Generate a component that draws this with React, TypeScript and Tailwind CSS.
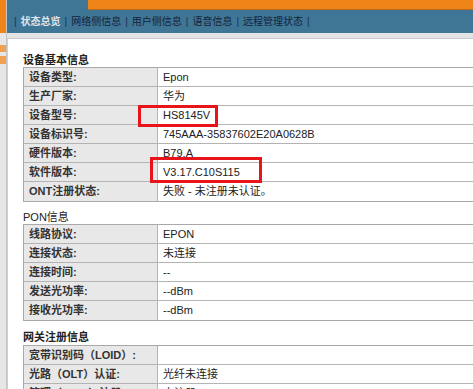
import React, { FC } from 'react';

type Row = { label: string; value: string };

const basic: Row[] = [
  { label: '设备类型:', value: 'Epon' },
  { label: '生产厂家:', value: '华为' },
  { label: '设备型号:', value: 'HS8145V' },
  { label: '设备标识号:', value: '745AAA-35837602E20A0628B' },
  { label: '硬件版本:', value: 'B79.A' },
  { label: '软件版本:', value: 'V3.17.C10S115' },
  { label: 'ONT注册状态:', value: '失败 - 未注册未认证。' },
];

const pon: Row[] = [
  { label: '线路协议:', value: 'EPON' },
  { label: '连接状态:', value: '未连接' },
  { label: '连接时间:', value: '--' },
  { label: '发送光功率:', value: '--dBm' },
  { label: '接收光功率:', value: '--dBm' },
];

const gateway: Row[] = [
  { label: '宽带识别码（LOID）:', value: '' },
  { label: '光路（OLT）认证:', value: '光纤未连接' },
  { label: '管理（ITMS）注册:', value: '未注册' },
];

const tabs = ['状态总览', '网络侧信息', '用户侧信息', '语音信息', '远程管理状态'];

const InfoTable: FC<{ rows: Row[] }> = ({ rows }) => (
  <div className="border border-[#a9a9a9] w-[460px] shrink-0">
    {rows.map((r, i) => (
      <div key={i} className={`flex h-[19px] ${i < rows.length - 1 ? 'border-b border-[#b4b4b4]' : ''}`}>
        <div className="w-[134px] shrink-0 bg-[#e8e8e8] border-r border-[#b4b4b4] pl-[5px] flex items-center font-bold text-[#333] text-[11px] whitespace-nowrap">
          {r.label}
        </div>
        <div className="flex-1 bg-white pl-[5px] flex items-center text-[#222] text-[11px] whitespace-nowrap">{r.value}</div>
      </div>
    ))}
  </div>
);

const App: FC = () => {
  return (
    <div
      className="w-[473px] h-[389px] overflow-hidden flex bg-white relative"
      style={{ fontFamily: '"Liberation Sans", "Noto Sans CJK SC", sans-serif' }}
    >
      <div className="w-[7px] shrink-0 flex flex-col bg-[#e6e6e6] border-r border-[#c4c4c4]">
        <div className="h-[33px] shrink-0 bg-[#ef8418]" />
        <div className="h-[12px] shrink-0" />
        <div className="h-[7px] shrink-0 bg-[#f0a050]" />
        <div className="h-[4px] shrink-0" />
        <div className="h-[8px] shrink-0 bg-[#f0a050]" />
      </div>

      <div className="flex-1 flex flex-col min-w-0">
        <div className="flex h-[10px] shrink-0">
          <div className="w-[81px] bg-[#3f7595]" />
          <div className="flex-1 bg-[#ef8418] border-b border-[#b86a1c]" />
        </div>
        <div className="h-[23px] shrink-0 bg-[#3f7595] flex items-center pl-[3px] text-[10px] whitespace-nowrap">
          {tabs.map((t, i) => (
            <React.Fragment key={t}>
              <span className="text-[#1d2f55] mx-[4px]">|</span>
              <span className={i === 0 ? 'text-[#dfe5ec] font-bold' : 'text-[#15243a]'}>{t}</span>
            </React.Fragment>
          ))}
          <span className="text-[#1d2f55] mx-[4px]">|</span>
        </div>
        <div className="h-[6px] shrink-0 bg-[#e3e3e3] border-b border-[#c8c8c8]" />
        <div className="flex-1 shrink-0 border-l border-[#cfcfcf] pl-[15px] pt-[14px]">
          <div className="text-[11px] font-bold text-[#222] h-[14px] leading-[14px]">设备基本信息</div>
          <InfoTable rows={basic} />
          <div className="text-[11px] text-[#222] h-[14px] leading-[14px] mt-[8px]">PON信息</div>
          <InfoTable rows={pon} />
          <div className="text-[11px] font-bold text-[#222] h-[14px] leading-[14px] mt-[9px] mb-[1px]">网关注册信息</div>
          <InfoTable rows={gateway} />
        </div>
      </div>

      <div className="absolute left-[138px] top-[105px] w-[80px] h-[22px] border-[3px] border-[#e8141c]" />
      <div className="absolute left-[150px] top-[157px] w-[112px] h-[26px] border-[3px] border-[#e8141c]" />
    </div>
  );
};

export default App;
